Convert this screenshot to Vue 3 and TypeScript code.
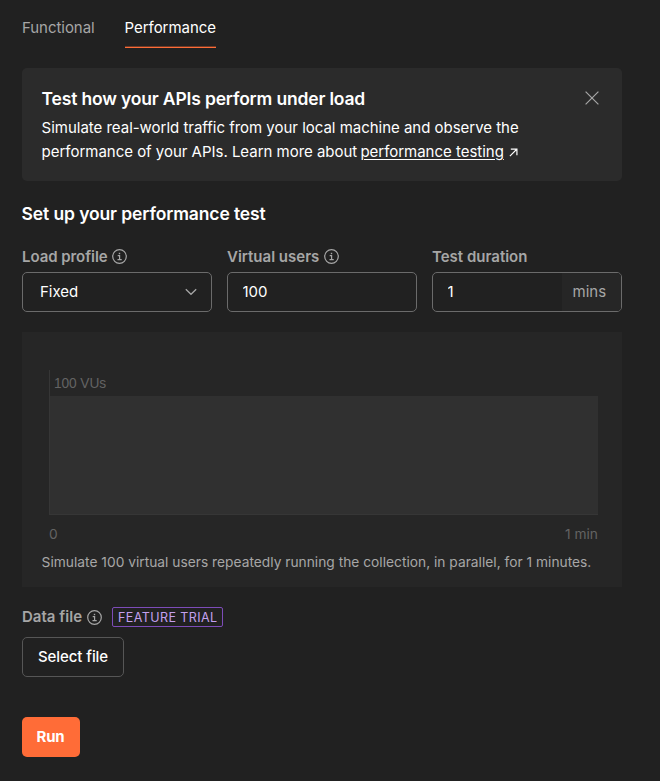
<script setup lang="ts">
import { computed, ref } from 'vue'

type Tab = 'Functional' | 'Performance'

const tabs: Tab[] = ['Functional', 'Performance']
const activeTab = ref<Tab>('Performance')
const bannerOpen = ref<boolean>(true)
const profile = ref<string>('Fixed')
const users = ref<string>('100')
const duration = ref<string>('1')

const summary = computed<string>(
  () =>
    `Simulate ${users.value} virtual users repeatedly running the collection, in parallel, for ${duration.value} minutes.`,
)
</script>

<template>
  <main class="page">
    <nav class="tabs">
      <button
        v-for="tab in tabs"
        :key="tab"
        class="tab"
        :class="{ active: tab === activeTab }"
        @click="activeTab = tab"
      >
        {{ tab }}
      </button>
    </nav>

    <section v-if="bannerOpen" class="banner">
      <div class="banner-body">
        <h2 class="banner-title">Test how your APIs perform under load</h2>
        <p class="banner-text">
          Simulate real-world traffic from your local machine and observe the<br />
          performance of your APIs. Learn more about <a class="link">performance testing</a>
          <svg class="arrow" viewBox="0 0 10 10"><path d="M1 9 8.3 1.7M2 1.2H8.8V8" /></svg>
        </p>
      </div>
      <button class="close" @click="bannerOpen = false">
        <svg viewBox="0 0 14 14"><path d="M.6.6 13.4 13.4M13.4.6.6 13.4" /></svg>
      </button>
    </section>

    <h3 class="heading">Set up your performance test</h3>

    <div class="fields">
      <div class="field">
        <div class="label">
          <span class="profile-text">Load profile</span>
          <svg class="info" viewBox="0 0 15 15">
            <circle cx="7.5" cy="7.5" r="6.8" />
            <path d="M5.7 6.7H7.6V10.6M5.5 10.7H9.7" />
            <rect x="6.8" y="3.8" width="1.4" height="1.4" />
          </svg>
        </div>
        <div class="control select">
          <span>{{ profile }}</span>
          <svg class="chevron" viewBox="0 0 12 8"><path d="M.8 1.2 6 6.3 11.2 1.2" /></svg>
        </div>
      </div>

      <div class="field">
        <div class="label">
          <span class="users-text">Virtual users</span>
          <svg class="info" viewBox="0 0 15 15">
            <circle cx="7.5" cy="7.5" r="6.8" />
            <path d="M5.7 6.7H7.6V10.6M5.5 10.7H9.7" />
            <rect x="6.8" y="3.8" width="1.4" height="1.4" />
          </svg>
        </div>
        <div class="control"><input v-model="users" class="input" type="text" /></div>
      </div>

      <div class="field">
        <div class="label"><span class="users-text">Test duration</span></div>
        <div class="control">
          <input v-model="duration" class="input" type="text" />
          <span class="unit">mins</span>
        </div>
      </div>
    </div>

    <section class="preview">
      <div class="plot">
        <span class="plot-label">{{ users }} VUs</span>
        <div class="area"></div>
      </div>
      <div class="axis">
        <span>0</span>
        <span>{{ duration }} min</span>
      </div>
      <p class="summary">{{ summary }}</p>
    </section>

    <div class="label data-label">
      <span>Data file</span>
      <svg class="info" viewBox="0 0 15 15">
        <circle cx="7.5" cy="7.5" r="6.8" />
        <path d="M5.7 6.7H7.6V10.6M5.5 10.7H9.7" />
        <rect x="6.8" y="3.8" width="1.4" height="1.4" />
      </svg>
      <span class="badge">FEATURE TRIAL</span>
    </div>
    <button class="file-button">Select file</button>
    <button class="run-button">Run</button>
  </main>
</template>

<style>
body {
  background: #212121;
}
</style>

<style scoped>
.page {
  box-sizing: border-box;
  width: 660px;
  height: 781px;
  padding: 8px 38px 0 22px;
  background: #212121;
  color: #fff;
  font-family: Inter, 'Liberation Sans', sans-serif;
  font-size: 15px;
  line-height: 24px;
}

h2,
h3,
p {
  margin: 0;
}

button {
  padding: 0;
  border: 0;
  background: none;
  color: inherit;
  font: inherit;
}

svg {
  flex: none;
  fill: none;
  stroke: #a6a6a6;
}

.tabs {
  display: flex;
  gap: 30px;
  height: 40px;
}

.tab {
  box-sizing: border-box;
  height: 40px;
  padding-top: 1px;
  border-bottom: 1px solid transparent;
  color: #a6a6a6;
  letter-spacing: -0.05px;
}

.tab.active {
  border-bottom-color: #ff6c37;
  box-shadow: inset 0 -1px #6e3b28;
  color: #fff;
}

.banner {
  box-sizing: border-box;
  display: flex;
  justify-content: space-between;
  height: 113px;
  margin-top: 20px;
  padding: 18px 23px 0 20px;
  border-radius: 5px;
  background: #2b2b2b;
}

.banner-title,
.heading {
  margin-left: -0.4px;
  font-size: 17.5px;
  font-weight: 600;
  letter-spacing: -0.15px;
  line-height: 25px;
}

.banner-title {
  letter-spacing: -0.17px;
}

.heading {
  margin-top: 20px;
  letter-spacing: -0.12px;
}

.banner-text {
  margin-top: 5px;
  margin-left: -0.4px;
  letter-spacing: -0.02px;
  white-space: nowrap;
}

.link {
  margin-left: -1px;
  text-decoration: underline;
  text-underline-offset: 2px;
}

.arrow {
  width: 9px;
  height: 9px;
  margin-left: 5.5px;
  vertical-align: 0;
  stroke: #fff;
  stroke-width: 1.3;
}

.close {
  display: flex;
  width: 14px;
  height: 14px;
  margin-top: 5px;
}

.close svg {
  width: 14px;
  height: 14px;
  stroke-width: 1.2;
}

.fields {
  display: grid;
  grid-template-columns: repeat(3, 190px);
  gap: 15px;
  margin-top: 21px;
}

.label {
  display: flex;
  align-items: center;
  gap: 5px;
  height: 20px;
  color: #a6a6a6;
  font-weight: 600;
  letter-spacing: -0.06px;
}

.profile-text {
  margin-right: -1px;
}

.users-text {
  letter-spacing: 0;
}

.info {
  width: 15px;
  height: 15px;
  stroke-width: 1.2;
}

.fields .info {
  margin-bottom: 1px;
}

.info rect {
  fill: #a6a6a6;
  stroke: none;
}

.control {
  box-sizing: border-box;
  display: flex;
  align-items: center;
  height: 40px;
  margin-top: 5px;
  overflow: hidden;
  border: 1px solid #6b6b6b;
  border-radius: 5px;
}

.select {
  justify-content: space-between;
  padding: 0 14px 0 17px;
}

.chevron {
  width: 12px;
  height: 8px;
  stroke-width: 1.3;
}

.input {
  flex: 1;
  box-sizing: border-box;
  min-width: 0;
  height: 38px;
  padding: 0 14px 2px 14.5px;
  border: 0;
  outline: 0;
  background: transparent;
  color: #fff;
  font: inherit;
}

.unit {
  box-sizing: border-box;
  width: 59px;
  height: 38px;
  padding-left: 10.5px;
  background: #262626;
  color: #a6a6a6;
  line-height: 38px;
}

.preview {
  box-sizing: border-box;
  height: 255px;
  margin-top: 20px;
  padding: 38px 20px 0;
  background: #262626;
}

.plot {
  box-sizing: border-box;
  display: flex;
  flex-direction: column;
  height: 145px;
  margin: 0 4px 0 7px;
  border-left: 1px solid #363636;
}

.plot-label {
  box-sizing: border-box;
  height: 26px;
  padding: 1px 0 0 4px;
  color: #636363;
  font-family: 'Liberation Sans', Arial, sans-serif;
  font-size: 13.75px;
  letter-spacing: -0.1px;
  line-height: 26px;
}

.area {
  flex: 1;
  border-bottom: 1px solid #363636;
  background: #303030;
}

.axis {
  display: flex;
  justify-content: space-between;
  margin: 9px 4px 0 7px;
  color: #636363;
  font-size: 13.75px;
  line-height: 20px;
}

.summary {
  margin-top: 8px;
  margin-left: -0.4px;
  color: #a6a6a6;
  font-size: 13.75px;
  letter-spacing: 0.012px;
  line-height: 20px;
  white-space: nowrap;
}

.data-label {
  margin-top: 20px;
  letter-spacing: 0.02px;
}

.badge {
  box-sizing: border-box;
  width: 111px;
  height: 20px;
  margin-left: 5px;
  padding: 0 5px;
  border: 1px solid #7d4cb8;
  border-radius: 2px;
  color: #c4a0ee;
  font-size: 12.5px;
  font-weight: 400;
  letter-spacing: 0.42px;
  line-height: 19px;
  white-space: nowrap;
}

.file-button {
  display: block;
  box-sizing: border-box;
  width: 102px;
  height: 40px;
  margin-top: 10px;
  border: 1px solid #565656;
  border-radius: 5px;
  font-weight: 500;
  letter-spacing: -0.08px;
}

.run-button {
  display: block;
  width: 58px;
  height: 40px;
  margin-top: 40px;
  padding-right: 1px;
  border-radius: 5px;
  background: #ff6c37;
  font-weight: 700;
  letter-spacing: -0.1px;
}
</style>
